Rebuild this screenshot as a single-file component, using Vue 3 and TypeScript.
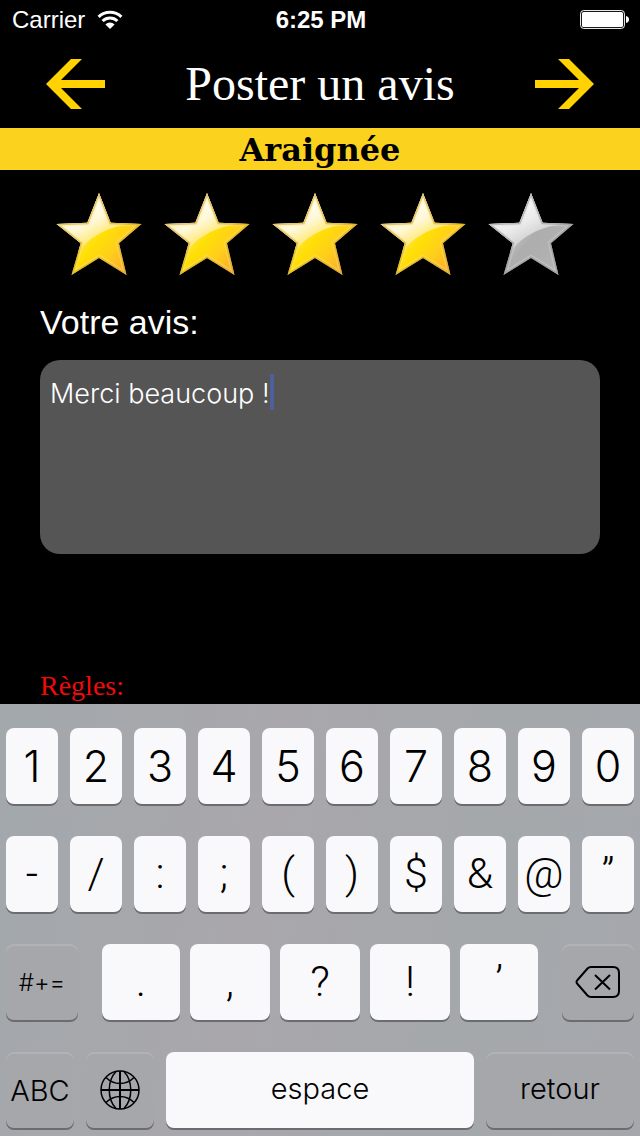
<script setup lang="ts">
import { computed, nextTick, onMounted, ref, watch } from 'vue'

const rating = ref(4)
const review = ref('Merci beaucoup !')
const field = ref<HTMLTextAreaElement | null>(null)
const caretOffset = ref(0)

const numberKeys = '1234567890'.split('')
const symbolKeys = ['-', '/', ':', ';', '(', ')', '$', '&', '@', '”']
const punctuationKeys = ['.', ',', '?', '!', '’']

const caretStyle = computed(() => ({ left: `${caretOffset.value}px` }))

function measureCaret(): void {
  const el = field.value
  const context = document.createElement('canvas').getContext('2d')
  if (!el || !context) return
  const style = getComputedStyle(el)
  context.font = `${style.fontWeight} ${style.fontSize} ${style.fontFamily}`
  const width = context.measureText(review.value).width
  caretOffset.value = Math.round(parseFloat(style.paddingLeft) + width)
}

function type(text: string): void {
  review.value += text
}

function erase(): void {
  review.value = review.value.slice(0, -1)
}

onMounted(measureCaret)
watch(review, () => nextTick(measureCaret))
</script>

<template>
  <div class="screen">
    <div class="status">
      <div class="carrier">
        <span>Carrier</span>
        <svg class="wifi" viewBox="0 0 26 20" aria-hidden="true">
          <path d="M1.6 6.8a16.4 16.4 0 0 1 22.8 0" />
          <path d="M5.6 11a10.6 10.6 0 0 1 14.8 0" />
          <path class="dot" d="M8.4 14.4a6.6 6.6 0 0 1 9.2 0L13 19z" />
        </svg>
      </div>
      <time class="clock">6:25 PM</time>
      <svg class="battery" viewBox="0 0 50 20" aria-hidden="true">
        <rect class="case" x="0.6" y="0.6" width="43.8" height="17.8" rx="3" />
        <rect x="2" y="2" width="41" height="15" rx="1.6" />
        <path d="M46 6c2 .4 3 1.600 3 3.500s-1 3.100-3 3.500z" />
      </svg>
    </div>

    <header class="header">
      <button class="nav" type="button" aria-label="Retour">
        <svg viewBox="0 0 60 52"><path d="M0 26 25 1h11L15 22h44v8H15l21 21H25z" /></svg>
      </button>
      <h1>Poster un avis</h1>
      <button class="nav" type="button" aria-label="Envoyer">
        <svg viewBox="0 0 60 52"><path d="M60 26 35 1H24l21 21H1v8h44L24 51h11z" /></svg>
      </button>
    </header>

    <h2 class="subject">Araignée</h2>

    <main class="content">
      <svg class="defs" width="0" height="0" aria-hidden="true">
        <defs>
          <linearGradient id="gold" x1="0.2" y1="0.3" x2="0.85" y2="0.85">
            <stop offset="0" stop-color="#fff0a0" />
            <stop offset="0.45" stop-color="#ffdf05" />
            <stop offset="0.7" stop-color="#ffce1c" />
            <stop offset="1" stop-color="#f9a92c" />
          </linearGradient>
          <linearGradient id="silver" x1="0.2" y1="0.3" x2="0.85" y2="0.85">
            <stop offset="0" stop-color="#d8d8d8" />
            <stop offset="0.45" stop-color="#adadad" />
            <stop offset="1" stop-color="#b4b4b4" />
          </linearGradient>
          <linearGradient id="goldShine" x1="0.25" y1="0.2" x2="0.75" y2="0.85">
            <stop offset="0" stop-color="#fffef8" />
            <stop offset="0.4" stop-color="#fff8d8" />
            <stop offset="0.8" stop-color="#ffe458" />
            <stop offset="1" stop-color="#ffdc28" />
          </linearGradient>
          <linearGradient id="silverShine" x1="0.25" y1="0.2" x2="0.75" y2="0.85">
            <stop offset="0" stop-color="#fafafa" />
            <stop offset="0.4" stop-color="#ececec" />
            <stop offset="1" stop-color="#bababa" />
          </linearGradient>
          <clipPath id="starShape">
            <path d="M44 1 55.700 30.700 86.500 32 64 51.300 71.500 83 44 66 16.500 83 25.700 51.300 1.500 32 32.300 30.700z" />
          </clipPath>
        </defs>
      </svg>

      <fieldset class="stars" aria-label="Note">
        <label v-for="n in 5" :key="n" class="star">
          <input v-model="rating" class="hidden" type="radio" name="rating" :value="n" :aria-label="`${n} sur 5`" />
          <svg viewBox="0 0 88 88" :class="n <= rating ? 'on' : 'off'" aria-hidden="true">
            <g clip-path="url(#starShape)">
              <rect class="body" width="88" height="88" />
              <path class="shine" d="M0 0h88v32C60 31 35 42 22 62L0 60z" />
              <path class="edge" d="M44 1 55.700 30.700 86.500 32 64 51.300 71.500 83 44 66 16.500 83 25.700 51.300 1.500 32 32.300 30.700z" />
              <path class="rim" d="M44 1 55.700 30.700 86.500 32 64 51.300 71.500 83 44 66 16.500 83 25.700 51.300 1.500 32 32.300 30.700z" />
            </g>
          </svg>
        </label>
      </fieldset>

      <label class="caption" for="review">Votre avis:</label>
      <div class="editor">
        <textarea id="review" ref="field" v-model="review" spellcheck="false"></textarea>
        <span class="caret" :style="caretStyle"></span>
      </div>

      <h3 class="rules">Règles:</h3>
    </main>

    <section class="keyboard" aria-label="Clavier">
      <div class="row ten">
        <button v-for="k in numberKeys" :key="k" class="key" type="button" @click="type(k)">{{ k }}</button>
      </div>
      <div class="row ten">
        <button v-for="k in symbolKeys" :key="k" class="key symbol" type="button" @click="type(k)">{{ k }}</button>
      </div>
      <div class="row third">
        <button class="key dark small" type="button">#+=</button>
        <div class="punctuation">
          <button v-for="k in punctuationKeys" :key="k" class="key symbol" type="button" @click="type(k)">{{ k }}</button>
        </div>
        <button class="key dark" type="button" aria-label="Effacer" @click="erase">
          <svg class="delete" viewBox="0 0 46 34">
            <path d="M16 2h22q6 0 6 6v18q0 6-6 6H16q-2 0-3.500-1.500L2.500 19q-2-2 0-4L12.500 3.500Q14 2 16 2z" />
            <path d="m20 10 15 14.500M35 10 20 24.500" />
          </svg>
        </button>
      </div>
      <div class="row fourth">
        <button class="key dark word" type="button">ABC</button>
        <button class="key dark" type="button" aria-label="Langue">
          <svg class="globe" viewBox="0 0 40 40">
            <circle cx="20" cy="20" r="19" />
            <path class="bold" d="M20 1v38M1 20h38" />
            <path d="M16 1.500C7 11 7 29 16 38.500M24 1.500c9 9.500 9 27.500 0 37" />
            <path d="M6 7.500c8 8 20 8 28 0M6 32.500c8-8 20-8 28 0" />
          </svg>
        </button>
        <button class="key word raised" type="button" @click="type(' ')">espace</button>
        <button class="key dark word raised" type="button" @click="type('\n')">retour</button>
      </div>
    </section>
  </div>
</template>

<style>
body {
  background: #000;
}
</style>

<style scoped>
.screen {
  display: flex;
  flex-direction: column;
  min-height: 100vh;
  background: #000;
  color: #fff;
  font-family: "Liberation Sans", Arial, sans-serif;
}

button {
  border: 0;
  padding: 0;
  background: none;
  color: inherit;
  cursor: pointer;
}

.status {
  display: grid;
  grid-template-columns: 1fr auto 1fr;
  align-items: center;
  height: 40px;
  padding: 0 10px 0 12px;
  font-size: 24px;
  line-height: 40px;
}

.carrier {
  display: flex;
  align-items: center;
  gap: 12px;
}

.wifi {
  width: 26px;
  height: 20px;
  fill: none;
  stroke: #fff;
  stroke-width: 3;
}

.wifi .dot {
  fill: #fff;
  stroke: none;
}

.clock {
  font-weight: 700;
}

.battery {
  justify-self: end;
  width: 50px;
  height: 20px;
  fill: #fff;
}

.battery .case {
  fill: none;
  stroke: #fff;
  stroke-width: 1;
}

.header {
  display: flex;
  align-items: center;
  justify-content: space-between;
  height: 88px;
  padding: 0 46px;
}

.nav svg {
  display: block;
  width: 60px;
  height: 52px;
  fill: #ffd200;
}

h1 {
  margin: 0;
  font: 400 48px/88px "Liberation Serif", Georgia, serif;
}

.subject {
  margin: 0;
  padding-top: 2px;
  background: #fbd31e;
  color: #000;
  font: 700 32px/40px "DejaVu Serif", Georgia, serif;
  text-align: center;
}

.content {
  flex: 1;
  padding: 22px 40px 0;
}

.defs {
  position: absolute;
}

.hidden {
  position: absolute;
  width: 1px;
  height: 1px;
  margin: 0;
  opacity: 0;
}

.stars {
  display: flex;
  gap: 20px;
  margin: 0;
  border: 0;
  padding: 0 15px;
}

.star {
  cursor: pointer;
}

.star svg {
  display: block;
  width: 88px;
  height: 88px;
}

.edge,
.rim {
  fill: none;
}

.edge {
  stroke-width: 6;
  stroke-opacity: 0.35;
}

.rim {
  stroke-width: 3;
  stroke-opacity: 0.5;
}

.on .body { fill: url(#gold); }
.on .shine { fill: url(#goldShine); }
.on .edge { stroke: #ffe68a; }
.on .rim { stroke: #c99a1c; }
.off .body { fill: url(#silver); }
.off .shine { fill: url(#silverShine); }
.off .edge { stroke: #dcdcdc; }
.off .rim { stroke: #8a8a8a; }

.caption {
  display: block;
  margin-bottom: 16px;
  padding-top: 20px;
  font-size: 34px;
  line-height: 44px;
}

.editor {
  position: relative;
}

textarea {
  display: block;
  box-sizing: border-box;
  width: 100%;
  height: 194px;
  border: 0;
  border-radius: 20px;
  padding: 16px 10px;
  outline: 0;
  resize: none;
  background: #555;
  color: #fff;
  caret-color: transparent;
  font-family: Inter, sans-serif;
  font-size: 27px;
  font-weight: 300;
  line-height: 36px;
}

.caret {
  position: absolute;
  top: 14px;
  width: 4px;
  height: 36px;
  background: #4f5f9b;
}

.rules {
  margin: 114px 0 0;
  color: #f00a0a;
  font: 400 28px/36px "Liberation Serif", Georgia, serif;
}

.keyboard {
  display: flex;
  flex-direction: column;
  gap: 32px;
  padding: 24px 6px 8px;
  background: linear-gradient(100deg, #a2a8ac, #a9a7ab 40%, #a4a8ab 75%, #a5a7ac);
  color: #000;
}

.row {
  display: grid;
  gap: 12px;
}

.ten {
  grid-template-columns: repeat(10, 1fr);
}

.third {
  grid-template-columns: 72px 1fr 72px;
  gap: 24px;
}

.punctuation {
  display: grid;
  grid-template-columns: 78fr 80fr 80fr 80fr 78fr;
  gap: 10px;
}

.fourth {
  grid-template-columns: 68px 68px 1fr 148px;
}

.key {
  display: flex;
  align-items: center;
  justify-content: center;
  min-width: 0;
  height: 76px;
  border-radius: 8px;
  background: #f9f9fb;
  box-shadow: 0 2px 0 #6b6c6f;
  font-family: Inter, sans-serif;
  font-size: 43px;
  font-weight: 300;
}

.symbol {
  padding-bottom: 2px;
  font-family: Roboto, sans-serif;
}

.dark {
  background: #a5a7ab;
  box-shadow: 0 2px 0 #6b6c6f, inset 0 2px 0 #b0b2b5;
}

.small {
  font-size: 24px;
}

.word {
  font-size: 29px;
}

.raised {
  padding-bottom: 4px;
}

.delete {
  width: 46px;
  height: 34px;
  fill: none;
  stroke: #000;
  stroke-width: 2;
}

.globe {
  width: 40px;
  height: 40px;
  fill: none;
  stroke: #000;
  stroke-width: 1.5;
}

.globe .bold {
  stroke-width: 2;
}
</style>
